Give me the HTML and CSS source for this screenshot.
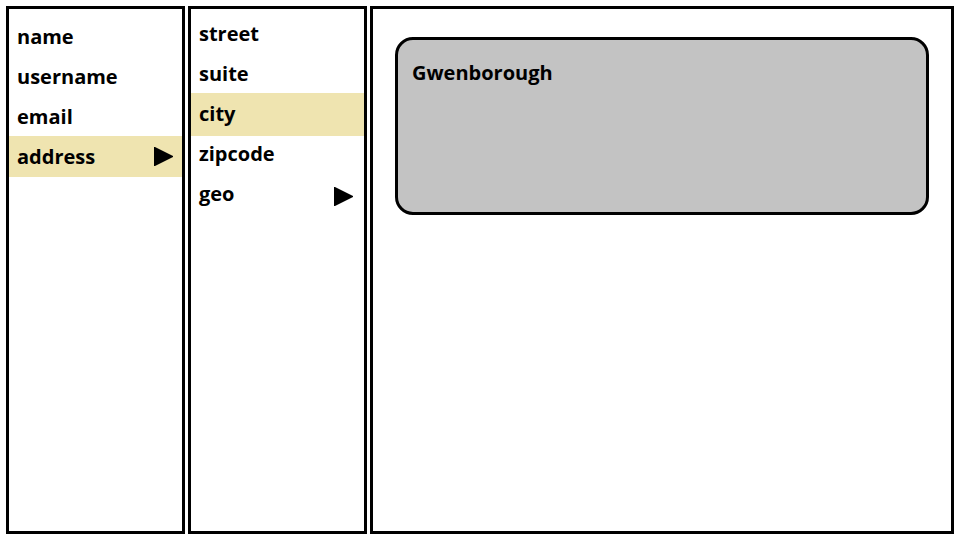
FILE: index.html
```html
<!DOCTYPE html>
<html lang="en">
<head>
<meta charset="utf-8">
<title>Object browser</title>
<meta name="viewport" content="width=device-width, initial-scale=1">
<link rel="stylesheet" href="styles.css">
</head>
<body>
<main class="browser">
  <nav class="column" aria-label="User">
    <button class="item" type="button">name</button>
    <button class="item" type="button">username</button>
    <button class="item" type="button">email</button>
    <button class="item item-selected" type="button">address
      <svg class="arrow" viewBox="0 0 19 19" aria-hidden="true"><path d="M0 0H1L19 9V10L1 19H0Z"/></svg>
    </button>
  </nav>
  <nav class="column column-nested" aria-label="Address">
    <button class="item" type="button">street</button>
    <button class="item" type="button">suite</button>
    <button class="item item-selected" type="button">city</button>
    <button class="item" type="button">zipcode</button>
    <button class="item" type="button">geo
      <svg class="arrow" viewBox="0 0 19 19" aria-hidden="true"><path d="M0 0H1L19 9V10L1 19H0Z"/></svg>
    </button>
  </nav>
  <section class="detail">
    <div class="value">Gwenborough</div>
  </section>
</main>
</body>
</html>
```

FILE: styles.css
```css
* {
  box-sizing: border-box;
}

body {
  margin: 0;
  background: #fff;
  color: #000;
  font: 700 20px/42px "Open Sans", "Noto Sans", sans-serif;
}

.browser {
  display: flex;
  gap: 3px;
  min-height: 100vh;
  padding: 6px;
}

.column {
  flex: 0 0 179px;
  padding-top: 7px;
  border: 3px solid #000;
}

.column-nested {
  padding-top: 4px;
}

.item {
  display: flex;
  align-items: flex-start;
  justify-content: space-between;
  width: 100%;
  height: 40px;
  padding: 0 9px 0 8px;
  border: 0;
  background: none;
  color: inherit;
  font: inherit;
  text-align: left;
  cursor: pointer;
}

.item-selected {
  background: #efe4b0;
  box-shadow: 0 1px #efe4b0;
}

.column-nested .item {
  padding-right: 11px;
}

.column-nested .item-selected {
  box-shadow: 0 3px #efe4b0;
}

.arrow {
  width: 19px;
  height: 19px;
  margin-top: 11px;
}

.column-nested .arrow {
  margin-top: 14px;
}

.detail {
  flex: 1;
  padding: 28px 22px;
  border: 3px solid #000;
}

.value {
  min-height: 178px;
  padding: 12px 14px;
  border: 3px solid #000;
  border-radius: 18px;
  background: #c3c3c3;
}
```
